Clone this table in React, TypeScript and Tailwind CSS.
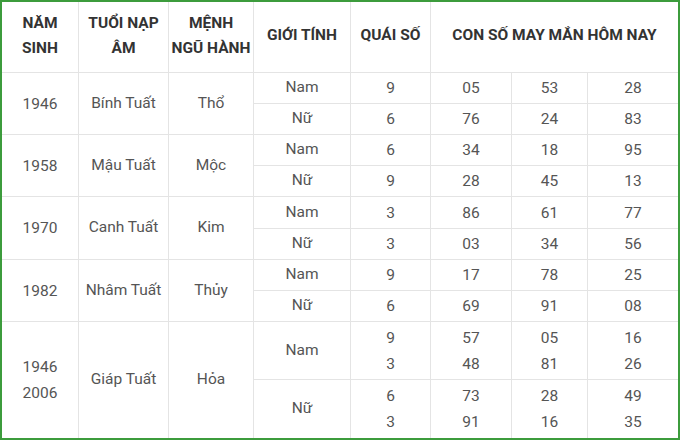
import React from "react";

type Sub = { g: string; q: string[]; n: string[][] };
type Group = { year: string[]; tuoi: string; menh: string; subs: Sub[] };

const groups: Group[] = [
  { year: ["1946"], tuoi: "Bính Tuất", menh: "Thổ", subs: [
    { g: "Nam", q: ["9"], n: [["05"], ["53"], ["28"]] },
    { g: "Nữ", q: ["6"], n: [["76"], ["24"], ["83"]] },
  ] },
  { year: ["1958"], tuoi: "Mậu Tuất", menh: "Mộc", subs: [
    { g: "Nam", q: ["6"], n: [["34"], ["18"], ["95"]] },
    { g: "Nữ", q: ["9"], n: [["28"], ["45"], ["13"]] },
  ] },
  { year: ["1970"], tuoi: "Canh Tuất", menh: "Kim", subs: [
    { g: "Nam", q: ["3"], n: [["86"], ["61"], ["77"]] },
    { g: "Nữ", q: ["3"], n: [["03"], ["34"], ["56"]] },
  ] },
  { year: ["1982"], tuoi: "Nhâm Tuất", menh: "Thủy", subs: [
    { g: "Nam", q: ["9"], n: [["17"], ["78"], ["25"]] },
    { g: "Nữ", q: ["6"], n: [["69"], ["91"], ["08"]] },
  ] },
  { year: ["1946", "2006"], tuoi: "Giáp Tuất", menh: "Hỏa", subs: [
    { g: "Nam", q: ["9", "3"], n: [["57", "48"], ["05", "81"], ["16", "26"]] },
    { g: "Nữ", q: ["6", "3"], n: [["73", "91"], ["28", "16"], ["49", "35"]] },
  ] },
];

const cell = "bg-white flex flex-col items-center justify-center text-center";

function Lines({ items }: { items: string[] }) {
  return (
    <>
      {items.map((t, i) => (
        <span key={i} className="leading-[26px]">{t}</span>
      ))}
    </>
  );
}

export default function App() {
  return (
    <div
      className="w-[680px] h-[440px] border-2 border-[#3c9c3c] bg-white"
      style={{ fontFamily: "Roboto, 'Liberation Sans', sans-serif" }}
    >
      <div className="grid h-full gap-px bg-[#e4e4e4] grid-cols-[76px_89px_84px_96px_79px_80px_75px_1fr] grid-rows-[70px_30px_30px_30px_30px_31px_30px_30px_30px_57px_1fr] text-[15.5px] text-[#555]">
        <div className={`${cell} font-bold text-[#333] leading-[25px] pb-[3px]`}>
          <span>NĂM</span><span>SINH</span>
        </div>
        <div className={`${cell} font-bold text-[#333] leading-[25px] pb-[3px]`}>
          <span>TUỔI NẠP</span><span>ÂM</span>
        </div>
        <div className={`${cell} font-bold text-[#333] leading-[25px] pb-[3px]`}>
          <span>MỆNH</span><span>NGŨ HÀNH</span>
        </div>
        <div className={`${cell} font-bold text-[#333] pb-[3px]`}>GIỚI TÍNH</div>
        <div className={`${cell} font-bold text-[#333] pb-[3px]`}>QUÁI SỐ</div>
        <div className={`${cell} col-span-3 font-bold text-[#333] pb-[3px]`}>CON SỐ MAY MẮN HÔM NAY</div>
        {groups.map((gr, gi) => (
          <React.Fragment key={gi}>
            <div className={`${cell} row-span-2`}><Lines items={gr.year} /></div>
            <div className={`${cell} row-span-2`}>{gr.tuoi}</div>
            <div className={`${cell} row-span-2`}>{gr.menh}</div>
            {gr.subs.map((s, si) => (
              <React.Fragment key={si}>
                <div className={cell}>{s.g}</div>
                <div className={cell}><Lines items={s.q} /></div>
                {s.n.map((col, ci) => (
                  <div key={ci} className={cell}><Lines items={col} /></div>
                ))}
              </React.Fragment>
            ))}
          </React.Fragment>
        ))}
      </div>
    </div>
  );
}
